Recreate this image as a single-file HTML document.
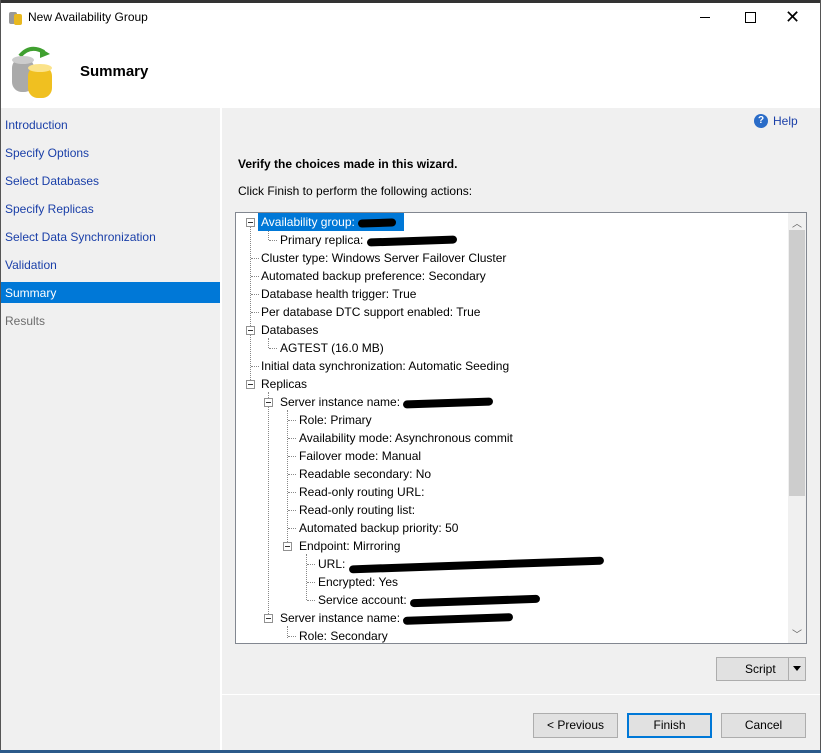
<!DOCTYPE html>
<html><head><style>
*{margin:0;padding:0;box-sizing:border-box}
body{width:821px;height:753px;position:relative;background:#f0f0f0;font-family:"Liberation Sans",sans-serif;font-size:12px;color:#000;overflow:hidden}
.a{position:absolute}
.nav{position:absolute;left:5px;color:#1a3fa8;font-size:12px}
.row{position:absolute;height:18px;line-height:18px;white-space:nowrap}
.h{position:absolute;height:0;border-top:1px dotted #888;width:8px}
.v{position:absolute;width:0;border-left:1px dotted #888}
.ex{position:absolute;width:9px;height:9px;border:1px solid #919191;background:#fff}
.ex:after{content:"";position:absolute;left:1px;top:3px;width:5px;height:1px;background:#333}
.sc{display:inline-block;height:8px;background:#000;border-radius:4px;vertical-align:middle;transform:rotate(-2deg)}
.btn{position:absolute;height:25px;background:#e1e1e1;border:1px solid #adadad;text-align:center;line-height:23px;font-size:12px}
</style></head><body>
<div class="a" style="left:0;top:0;width:821px;height:3px;background:#333"></div>
<div class="a" style="left:0;top:3px;width:821px;height:105px;background:#fff"></div>
<div class="a" style="left:0;top:0;width:1px;height:753px;background:#555"></div>
<div class="a" style="left:820px;top:0;width:1px;height:753px;background:#555"></div>
<!-- title icon -->
<div class="a" style="left:9px;top:12px;width:8px;height:12px;background:#999;border-radius:2px"></div>
<div class="a" style="left:14px;top:14px;width:8px;height:11px;background:#e8b820;border-radius:2px"></div>
<div class="a" style="left:28px;top:10px;font-size:12px">New Availability Group</div>
<div class="a" style="left:700px;top:17px;width:10px;height:1px;background:#000"></div>
<div class="a" style="left:745px;top:12px;width:11px;height:11px;border:1px solid #000"></div>
<div class="a" style="left:785px;top:7px;font-size:18px;line-height:20px">✕</div>
<!-- header icon -->
<svg class="a" style="left:8px;top:42px" width="52" height="58">
<path d="M12 14 Q22 2 36 10" stroke="#40a030" stroke-width="4" fill="none"/><path d="M32 6 L42 12 L32 16Z" fill="#40a030"/>
<rect x="4" y="16" width="22" height="34" rx="10" fill="#aaa"/><ellipse cx="15" cy="18" rx="11" ry="4" fill="#ccc"/>
<rect x="20" y="24" width="24" height="32" rx="10" fill="#f0c020"/><ellipse cx="32" cy="26" rx="12" ry="4" fill="#fbe38a"/>
</svg>
<div class="a" style="left:80px;top:63px;font-size:15px;font-weight:bold">Summary</div>
<!-- left nav -->
<div class="a" style="left:1px;top:108px;width:219px;height:645px;background:#f0f0f0"></div>
<div class="a" style="left:220px;top:108px;width:2px;height:645px;background:#fff"></div>
<div class="nav" style="top:118px">Introduction</div>
<div class="nav" style="top:146px">Specify Options</div>
<div class="nav" style="top:174px">Select Databases</div>
<div class="nav" style="top:202px">Specify Replicas</div>
<div class="nav" style="top:230px">Select Data Synchronization</div>
<div class="nav" style="top:258px">Validation</div>
<div class="a" style="left:1px;top:282px;width:219px;height:21px;background:#0078d7"></div>
<div class="nav" style="top:286px;color:#fff">Summary</div>
<div class="nav" style="top:314px;color:#6d6d6d">Results</div>
<!-- help -->
<div class="a" style="left:754px;top:114px;width:14px;height:14px;border-radius:50%;background:#2a6cc8;color:#fff;font-size:10px;font-weight:bold;text-align:center;line-height:14px">?</div>
<div class="a" style="left:773px;top:114px;color:#1a3fa8">Help</div>
<div class="a" style="left:238px;top:157px;font-weight:bold">Verify the choices made in this wizard.</div>
<div class="a" style="left:238px;top:184px">Click Finish to perform the following actions:</div>
<!-- tree box -->
<div class="a" style="left:235px;top:212px;width:572px;height:432px;background:#fff;border:1px solid #828790"></div>
<div class="a" style="left:788px;top:213px;width:18px;height:430px;background:#f0f0f0"></div>
<div class="a" style="left:789px;top:230px;width:16px;height:266px;background:#cdcdcd"></div>
<div class="a" style="left:792px;top:215px;font-size:10px;color:#606060">︿</div>
<div class="a" style="left:792px;top:626px;font-size:10px;color:#606060">﹀</div>
<div class="v" style="left:250px;top:222px;height:162px"></div>
<div class="v" style="left:268px;top:230px;height:10px"></div>
<div class="v" style="left:268px;top:338px;height:10px"></div>
<div class="v" style="left:268px;top:392px;height:226px"></div>
<div class="v" style="left:287px;top:410px;height:136px"></div>
<div class="v" style="left:287px;top:626px;height:12px"></div>
<div class="v" style="left:306px;top:554px;height:46px"></div>

<div class="a" style="left:258px;top:213px;width:146px;height:18px;background:#0078d7"></div>
<div class="ex" style="left:246px;top:218px"></div><div class="row" style="left:261px;top:213px;color:#fff">Availability group: <span class="sc" style="width:38px"></span></div>
<div class="h" style="left:269px;top:240px"></div><div class="row" style="left:280px;top:231px">Primary replica: <span class="sc" style="width:90px"></span></div>
<div class="h" style="left:251px;top:258px"></div><div class="row" style="left:261px;top:249px">Cluster type: Windows Server Failover Cluster</div>
<div class="h" style="left:251px;top:276px"></div><div class="row" style="left:261px;top:267px">Automated backup preference: Secondary</div>
<div class="h" style="left:251px;top:294px"></div><div class="row" style="left:261px;top:285px">Database health trigger: True</div>
<div class="h" style="left:251px;top:312px"></div><div class="row" style="left:261px;top:303px">Per database DTC support enabled: True</div>
<div class="ex" style="left:246px;top:326px"></div><div class="row" style="left:261px;top:321px">Databases</div>
<div class="h" style="left:269px;top:348px"></div><div class="row" style="left:280px;top:339px">AGTEST (16.0 MB)</div>
<div class="h" style="left:251px;top:366px"></div><div class="row" style="left:261px;top:357px">Initial data synchronization: Automatic Seeding</div>
<div class="ex" style="left:246px;top:380px"></div><div class="row" style="left:261px;top:375px">Replicas</div>
<div class="ex" style="left:264px;top:398px"></div><div class="row" style="left:280px;top:393px">Server instance name: <span class="sc" style="width:90px"></span></div>
<div class="h" style="left:288px;top:420px"></div><div class="row" style="left:299px;top:411px">Role: Primary</div>
<div class="h" style="left:288px;top:438px"></div><div class="row" style="left:299px;top:429px">Availability mode: Asynchronous commit</div>
<div class="h" style="left:288px;top:456px"></div><div class="row" style="left:299px;top:447px">Failover mode: Manual</div>
<div class="h" style="left:288px;top:474px"></div><div class="row" style="left:299px;top:465px">Readable secondary: No</div>
<div class="h" style="left:288px;top:492px"></div><div class="row" style="left:299px;top:483px">Read-only routing URL:</div>
<div class="h" style="left:288px;top:510px"></div><div class="row" style="left:299px;top:501px">Read-only routing list:</div>
<div class="h" style="left:288px;top:528px"></div><div class="row" style="left:299px;top:519px">Automated backup priority: 50</div>
<div class="ex" style="left:283px;top:542px"></div><div class="row" style="left:299px;top:537px">Endpoint: Mirroring</div>
<div class="h" style="left:307px;top:564px"></div><div class="row" style="left:318px;top:555px">URL: <span class="sc" style="width:255px"></span></div>
<div class="h" style="left:307px;top:582px"></div><div class="row" style="left:318px;top:573px">Encrypted: Yes</div>
<div class="h" style="left:307px;top:600px"></div><div class="row" style="left:318px;top:591px">Service account: <span class="sc" style="width:130px"></span></div>
<div class="ex" style="left:264px;top:614px"></div><div class="row" style="left:280px;top:609px">Server instance name: <span class="sc" style="width:110px"></span></div>
<div class="h" style="left:288px;top:636px"></div><div class="row" style="left:299px;top:627px">Role: Secondary</div>
<!-- script button -->
<div class="btn" style="left:716px;top:657px;width:90px;line-height:22px;height:24px;text-align:left;padding-left:28px">Script</div>
<div class="a" style="left:788px;top:657px;width:1px;height:24px;background:#adadad"></div>
<div class="a" style="left:793px;top:666px;border-left:4px solid transparent;border-right:4px solid transparent;border-top:5px solid #000"></div>
<div class="a" style="left:222px;top:694px;width:598px;height:1px;background:#fff"></div>
<div class="btn" style="left:533px;top:713px;width:85px">&lt; Previous</div>
<div class="btn" style="left:627px;top:713px;width:85px;border:2px solid #0078d7;line-height:21px">Finish</div>
<div class="btn" style="left:721px;top:713px;width:85px">Cancel</div>
<div class="a" style="left:0;top:750px;width:821px;height:3px;background:#2b5a8a"></div>
</body></html>
